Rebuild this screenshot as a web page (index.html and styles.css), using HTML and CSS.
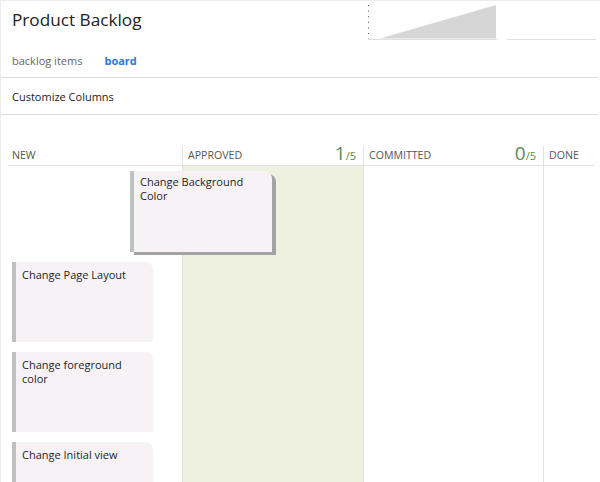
FILE: index.html
```html
<!DOCTYPE html>
<html>
<head>
<meta charset="utf-8">
<link rel="stylesheet" href="styles.css">
</head>
<body>
<div class="frame">
  <div class="top">
    <h1 class="title">Product Backlog</h1>
    <svg class="chart" width="240" height="45" viewBox="0 0 240 45">
      <line x1="8.5" y1="5" x2="8.5" y2="39" stroke="#555" stroke-width="1" stroke-dasharray="1 4.6"/>
      <polygon points="20,38.5 136,5 136,38.5" fill="#d6d6d6"/>
      <line x1="8" y1="39.5" x2="137" y2="39.5" stroke="#e0e0e0" stroke-width="1"/>
      <line x1="147" y1="39.5" x2="236" y2="39.5" stroke="#e0e0e0" stroke-width="1"/>
    </svg>
  </div>
  <div class="tabs">
    <span class="tab">backlog items</span>
    <span class="tab active">board</span>
  </div>
  <div class="toolbar">Customize Columns</div>
  <div class="board">
    <div class="col col-new">
      <div class="col-head"><span class="col-name">NEW</span></div>
      <div class="col-body">
        <div class="card"><span>Change Page Layout</span></div>
        <div class="card"><span>Change foreground color</span></div>
        <div class="card"><span>Change Initial view</span></div>
      </div>
    </div>
    <div class="col col-approved">
      <div class="col-head"><span class="col-name">APPROVED</span><span class="count"><b>1</b>/5</span></div>
      <div class="col-body tinted"></div>
    </div>
    <div class="col col-committed">
      <div class="col-head"><span class="col-name">COMMITTED</span><span class="count"><b>0</b>/5</span></div>
      <div class="col-body"></div>
    </div>
    <div class="col col-done">
      <div class="col-head"><span class="col-name">DONE</span></div>
      <div class="col-body"></div>
    </div>
    <div class="card dragging"><span>Change Background Color</span></div>
  </div>
</div>
</body>
</html>
```
FILE: styles.css
```css
html, body {
  margin: 0;
  padding: 0;
  background: #fff;
}
body {
  font-family: "Open Sans", "Noto Sans", sans-serif;
  color: #222;
}
.frame {
  width: 599px;
  height: 481px;
  border-top: 1px solid #ececec;
  border-left: 1px solid #ececec;
  border-bottom: 1px solid #ececec;
  overflow: hidden;
  display: flex;
  flex-direction: column;
}
.top {
  flex: none;
  height: 44px;
  display: flex;
  justify-content: space-between;
  align-items: flex-start;
}
.title {
  margin: 8px 0 0 11px;
  font-size: 17.2px;
  font-weight: 400;
  line-height: 22px;
  color: #222;
}
.chart {
  margin-top: -1px;
  display: block;
}
.tabs {
  flex: none;
  height: 32px;
  border-bottom: 1px solid #dcdcdc;
  display: flex;
  align-items: center;
  gap: 22px;
  padding-left: 11px;
  margin-right: 2px;
  font-size: 11px;
}
.tab {
  color: #666;
  margin-top: -2px;
}
.tab.active {
  color: #2b79d9;
  font-weight: 700;
}
.toolbar {
  flex: none;
  height: 36px;
  border-bottom: 1px solid #dcdcdc;
  margin-right: 2px;
  padding-left: 11px;
  display: flex;
  align-items: center;
  font-size: 11px;
  color: #222;
}
.board {
  position: relative;
  margin-top: 31px;
  margin-left: 7px;
  display: grid;
  grid-template-columns: 174px 181px 180px 52px;
  flex: 1;
  min-height: 0;
}
.col {
  display: flex;
  flex-direction: column;
}
.col + .col {
  border-left: 1px solid #e2e2e2;
}
.col-head {
  flex: none;
  height: 19px;
  border-bottom: 1px solid #e2e2e2;
  display: flex;
  justify-content: space-between;
  align-items: flex-end;
  padding: 0 7px 0 5px;
  font-size: 10.6px;
  color: #555;
}
.col-new .col-head {
  padding-left: 4px;
}
.col-name {
  padding-bottom: 3px;
}
.count {
  color: #5b8a5b;
  font-size: 11px;
  line-height: 19px;
}
.count b {
  font-weight: 400;
  font-size: 19px;
}
.col-body {
  flex: 1;
}
.tinted {
  background: #eef1df;
}
.col-new .col-body {
  padding: 96px 0 0 4px;
  display: flex;
  flex-direction: column;
  gap: 10px;
  overflow: hidden;
}
.card {
  box-sizing: border-box;
  width: 141px;
  height: 80px;
  flex: none;
  background: #f6f2f6;
  border-left: 4px solid #c0c0c0;
  border-top-right-radius: 8px;
  padding: 6px 0 0 6px;
  font-size: 11px;
  line-height: 14px;
  color: #1e1e1e;
}
.card span {
  display: block;
  width: 124px;
}
.dragging {
  position: absolute;
  left: 122px;
  top: 25px;
  width: 142px;
  height: 81px;
  padding-top: 4px;
  box-shadow: 4px 3px 0 #a3a3a3;
}
```
